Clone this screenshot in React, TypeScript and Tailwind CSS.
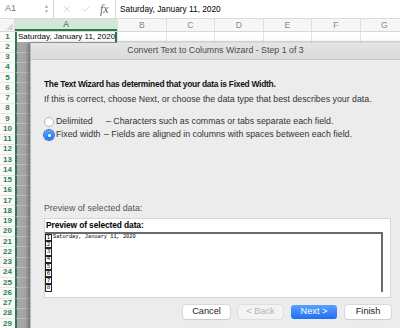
import { X, Check } from 'lucide-react';

const COLS = ['B', 'C', 'D', 'E', 'F', 'G'];
const ROWS = Array.from({ length: 29 }, (_, i) => i + 1);

function Radio({ checked }: { checked?: boolean }) {
  if (checked) {
    return (
      <span className="w-[10px] h-[10px] shrink-0 rounded-full bg-gradient-to-b from-[#5aa2ff] to-[#1f6ff0] flex items-center justify-center shadow-[0_0_0_1px_#2a6fd8]">
        <span className="w-[3px] h-[3px] rounded-full bg-white" />
      </span>
    );
  }
  return <span className="w-[10px] h-[10px] shrink-0 rounded-full bg-white border border-[#b5b5b5]" />;
}

export default function App() {
  return (
    <div
      className="w-[400px] h-[328px] relative overflow-hidden bg-white text-[#222] whitespace-nowrap"
      style={{ fontFamily: '"Liberation Sans", Arial, sans-serif' }}
    >
      {/* Formula bar */}
      <div className="h-[19px] flex items-center border-b border-[#dcdcdc] bg-white">
        <div className="w-[54px] h-full flex items-center justify-between pl-[5px] pr-[4px] border-r border-[#d6d6d6]">
          <span className="text-[9px] text-[#777]">A1</span>
          <span className="flex flex-col items-center leading-none text-[#aaa] text-[5px]">
            <span>▲</span>
            <span>▼</span>
          </span>
        </div>
        <div className="w-[62px] h-full flex items-center pl-[8px] gap-[9px] border-r border-[#d6d6d6]">
          <X className="w-[10px] h-[10px] text-[#bbb]" strokeWidth={1.5} />
          <Check className="w-[10px] h-[10px] text-[#bbb]" strokeWidth={1.5} />
          <span className="text-[12px] italic text-[#666]" style={{ fontFamily: '"Liberation Serif", serif' }}>
            fx
          </span>
        </div>
        <span className="pl-[4px] text-[8.3px] text-black">Saturday, January 11, 2020</span>
      </div>

      {/* Column headers */}
      <div className="h-[13px] flex bg-[#f6f6f6] border-b border-[#d8d8d8]">
        <div className="w-[15px] shrink-0 h-full relative border-r border-[#d8d8d8]">
          <span className="absolute right-[1px] bottom-[1px] w-0 h-0 border-l-[7px] border-l-transparent border-b-[7px] border-b-[#d8d8d8]" />
        </div>
        <div className="w-[102px] shrink-0 h-full flex items-center justify-center bg-[#d3e8da] border-b-2 border-[#2b7a4b] text-[8.5px] leading-none text-[#2b6a45]">
          A
        </div>
        {COLS.map(c => (
          <div key={c} className="w-[48.5px] shrink-0 h-full flex items-center justify-center border-l border-[#dedede] text-[8.5px] leading-none text-[#888]">
            {c}
          </div>
        ))}
      </div>

      {/* Rows */}
      <div className="flex flex-col leading-none">
        {ROWS.map(r => (
          <div key={r} className="h-[10.25px] flex shrink-0 overflow-hidden">
            <div className="w-[15px] shrink-0 flex items-center justify-center text-[8px] font-bold text-[#2e8052] bg-[#fafafa] border-b border-[#e6e6e6]">
              {r}
            </div>
            {r === 1 ? (
              <div className="w-[102px] shrink-0 flex items-center pl-[1px] border-x-2 border-[#2b7a4b] text-[8px] text-black bg-white">
                Saturday, January 11, 2020
              </div>
            ) : (
              <div className="w-[102px] shrink-0 border-l-2 border-[#2b7a4b] bg-[#a7a7a7] border-b border-b-[#bababa]" />
            )}
            {COLS.map(c => (
              <div key={c} className="w-[48.5px] shrink-0 border-l border-b border-[#e3e3e3]" />
            ))}
          </div>
        ))}
      </div>

      {/* Wizard dialog */}
      <div className="absolute left-[30px] top-[43px] w-[380px] h-[300px] bg-[#ececec] shadow-[-2px_0_4px_rgba(0,0,0,0.35)] border-l border-[#bdbdbd] flex flex-col">
        <div className="h-[17px] shrink-0 flex items-center justify-center bg-gradient-to-b from-[#e6e6e6] to-[#d9d9d9] border-b border-[#c8c8c8] text-[8.8px] text-[#4a4a4a] pr-[10px]">
          Convert Text to Columns Wizard - Step 1 of 3
        </div>
        <div className="flex flex-col pl-[13px] pr-[20px]">
          <p className="mt-[18px] h-[12px] leading-[12px] text-[8.4px] tracking-[-0.25px] font-bold text-[#111]">
            The Text Wizard has determined that your data is Fixed Width.
          </p>
          <p className="mt-[3px] h-[12px] leading-[12px] text-[8.8px] text-[#333]">
            If this is correct, choose Next, or choose the data type that best describes your data.
          </p>
          <div className="mt-[11px] flex flex-col gap-[1px] text-[8.8px] text-[#333]">
            <div className="h-[12px] flex items-center gap-[2px]">
              <Radio />
              <span className="w-[48px]">Delimited</span>
              <span>– Characters such as commas or tabs separate each field.</span>
            </div>
            <div className="h-[12px] flex items-center gap-[2px]">
              <Radio checked />
              <span className="w-[46px]">Fixed width</span>
              <span>– Fields are aligned in columns with spaces between each field.</span>
            </div>
          </div>

          <p className="mt-[61px] h-[12px] leading-[12px] text-[8.8px] text-[#555]">Preview of selected data:</p>
          <div className="mt-[4px] w-[347px] h-[80px] bg-white border border-[#d6d6d6] flex flex-col">
            <div className="h-[13px] shrink-0 flex items-center pl-[1px] text-[8.4px] tracking-[-0.1px] font-bold text-black">
              Preview of selected data:
            </div>
            <div className="w-[338px] h-[60px] border-t-2 border-r-2 border-[#6a6a6a] flex flex-col overflow-hidden">
              {[1, 2, 3, 4, 5, 6, 7, 8].map(n => (
                <div key={n} className="h-[7.2px] shrink-0 flex items-center">
                  <span
                    className="w-[7px] h-[7.2px] border-[0.75px] border-[#222] bg-white flex items-center justify-center text-[5.5px] leading-none text-black"
                    style={{ fontFamily: '"DejaVu Sans", sans-serif' }}
                  >
                    {n}
                  </span>
                  {n === 1 && (
                    <span className="pl-[1px] text-[5.3px] leading-none text-black" style={{ fontFamily: '"Liberation Mono", monospace' }}>
                      Saturday, January 11, 2020
                    </span>
                  )}
                </div>
              ))}
            </div>
          </div>

          <div className="mt-[7px] flex justify-end gap-[8px] w-[347px] text-[9.2px] leading-none">
            <button className="w-[47px] h-[14px] bg-white rounded-[3px] shadow-[0_0_0_0.5px_#c4c4c4,0_1px_1px_rgba(0,0,0,0.1)] text-[#222]">
              Cancel
            </button>
            <button className="w-[45px] h-[14px] bg-[#f3f3f3] rounded-[3px] shadow-[0_0_0_0.5px_#d0d0d0] text-[#b5b5b5]">
              &lt; Back
            </button>
            <button className="w-[46px] h-[14px] bg-gradient-to-b from-[#5aa0fb] to-[#1f6ef2] rounded-[3px] text-white">
              Next &gt;
            </button>
            <button className="w-[46px] h-[14px] bg-white rounded-[3px] shadow-[0_0_0_0.5px_#c4c4c4,0_1px_1px_rgba(0,0,0,0.1)] text-[#222]">
              Finish
            </button>
          </div>
        </div>
      </div>
    </div>
  );
}
